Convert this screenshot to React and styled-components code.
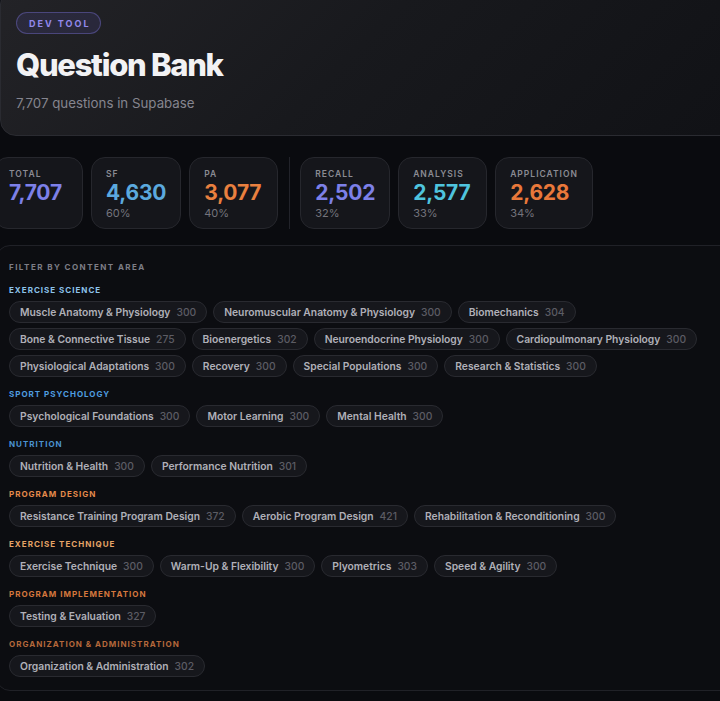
import React from 'react';
import styled, { createGlobalStyle } from 'styled-components';

const GlobalStyle = createGlobalStyle`
  html, body {
    margin: 0;
    padding: 0;
    background: #0a0b0f;
    overflow: hidden;
  }
  body {
    font-family: Inter, "Noto Sans", "Liberation Sans", sans-serif;
    -webkit-font-smoothing: antialiased;
  }
`;

const Page = styled.div`
  width: 780px;
  display: flex;
  flex-direction: column;
`;

const HeaderCard = styled.header`
  margin-top: -12px;
  padding: 23px 15px 22px;
  border: 1px solid #2a2b31;
  border-radius: 16px;
  background: linear-gradient(135deg, #232327 0%, #18191d 45%, #101115 100%);
  display: flex;
  flex-direction: column;
  align-items: flex-start;
`;

const Badge = styled.span`
  height: 22px;
  box-sizing: border-box;
  display: inline-flex;
  align-items: center;
  padding: 0 9px 0 12px;
  border-radius: 11px;
  border: 1px solid rgba(128, 118, 230, 0.38);
  background: rgba(110, 100, 220, 0.13);
  color: #9288ec;
  font-size: 9px;
  font-weight: 700;
  letter-spacing: 2px;
`;

const Title = styled.h1`
  margin: 12px 0 0;
  font-size: 31px;
  line-height: 37px;
  font-weight: 800;
  letter-spacing: -1.3px;
  color: #f2f2f4;
`;

const Subtitle = styled.p`
  margin: 10px 0 0;
  font-size: 13.3px;
  line-height: 20px;
  color: #85858f;
`;

const StatsRow = styled.div`
  display: flex;
  align-items: stretch;
  gap: 8px;
  margin: 21px 0 0 -6px;
`;

const StatCard = styled.div`
  box-sizing: border-box;
  min-width: 89px;
  padding: 11px 14px 8px;
  border: 1px solid #26272d;
  border-radius: 14px;
  background: #15161b;
  display: flex;
  flex-direction: column;
`;

const StatLabel = styled.span`
  font-size: 8.5px;
  line-height: 11px;
  font-weight: 600;
  letter-spacing: 1px;
  color: #8b8b93;
`;

const StatValue = styled.span`
  font-size: 21px;
  line-height: 26px;
  font-weight: 700;
  letter-spacing: -0.2px;
  color: ${({ $color }) => $color};
`;

const StatPct = styled.span`
  font-size: 11px;
  line-height: 14px;
  color: #74747c;
`;

const Divider = styled.div`
  width: 1px;
  margin: 0 2px 0 3px;
  background: #22232a;
`;

const FilterCard = styled.section`
  margin: 16px 0 0 -4px;
  padding: 15px 12px 13px;
  border: 1px solid #202127;
  border-radius: 14px;
  background: #0c0d11;
  display: flex;
  flex-direction: column;
`;

const FilterLabel = styled.div`
  font-size: 8px;
  line-height: 12px;
  font-weight: 700;
  letter-spacing: 1.45px;
  color: #7d7d86;
  margin-bottom: 11px;
`;

const Group = styled.div`
  display: flex;
  flex-direction: column;
  & + & {
    margin-top: 11px;
  }
`;

const GroupTitle = styled.div`
  font-size: 8px;
  line-height: 12px;
  font-weight: 700;
  letter-spacing: 1px;
  color: ${({ $color }) => $color};
  margin-bottom: 5px;
`;

const ChipWrap = styled.div`
  display: flex;
  flex-wrap: wrap;
  gap: 5px 6px;
  max-width: 700px;
`;

const Chip = styled.button`
  height: 22px;
  box-sizing: border-box;
  display: inline-flex;
  align-items: center;
  gap: 6px;
  padding: 0 10px;
  border: 1px solid #292a30;
  border-radius: 11px;
  background: #16171c;
  font-family: inherit;
  font-size: 10.3px;
  font-weight: 600;
  color: #b0b0b8;
  cursor: pointer;
`;

const ChipCount = styled.span`
  font-weight: 500;
  color: #5c5c64;
`;

const stats = [
  { label: 'TOTAL', value: '7,707', color: '#7d80e8' },
  { label: 'SF', value: '4,630', pct: '60%', color: '#5ba9de' },
  { label: 'PA', value: '3,077', pct: '40%', color: '#e9803f' },
];

const levels = [
  { label: 'RECALL', value: '2,502', pct: '32%', color: '#7d80e8' },
  { label: 'ANALYSIS', value: '2,577', pct: '33%', color: '#4fc4de' },
  { label: 'APPLICATION', value: '2,628', pct: '34%', color: '#e9783a' },
];

const groups = [
  {
    title: 'EXERCISE SCIENCE',
    color: '#8dc2ea',
    items: [
      ['Muscle Anatomy & Physiology', 300],
      ['Neuromuscular Anatomy & Physiology', 300],
      ['Biomechanics', 304],
      ['Bone & Connective Tissue', 275],
      ['Bioenergetics', 302],
      ['Neuroendocrine Physiology', 300],
      ['Cardiopulmonary Physiology', 300],
      ['Physiological Adaptations', 300],
      ['Recovery', 300],
      ['Special Populations', 300],
      ['Research & Statistics', 300],
    ],
  },
  {
    title: 'SPORT PSYCHOLOGY',
    color: '#4f9de0',
    items: [
      ['Psychological Foundations', 300],
      ['Motor Learning', 300],
      ['Mental Health', 300],
    ],
  },
  {
    title: 'NUTRITION',
    color: '#4a92d0',
    items: [
      ['Nutrition & Health', 300],
      ['Performance Nutrition', 301],
    ],
  },
  {
    title: 'PROGRAM DESIGN',
    color: '#e58a4b',
    items: [
      ['Resistance Training Program Design', 372],
      ['Aerobic Program Design', 421],
      ['Rehabilitation & Reconditioning', 300],
    ],
  },
  {
    title: 'EXERCISE TECHNIQUE',
    color: '#e6a467',
    items: [
      ['Exercise Technique', 300],
      ['Warm-Up & Flexibility', 300],
      ['Plyometrics', 303],
      ['Speed & Agility', 300],
    ],
  },
  {
    title: 'PROGRAM IMPLEMENTATION',
    color: '#d5773d',
    items: [['Testing & Evaluation', 327]],
  },
  {
    title: 'ORGANIZATION & ADMINISTRATION',
    color: '#b5683b',
    items: [['Organization & Administration', 302]],
  },
];

const Stat = ({ label, value, pct, color }) => (
  <StatCard>
    <StatLabel>{label}</StatLabel>
    <StatValue $color={color}>{value}</StatValue>
    {pct && <StatPct>{pct}</StatPct>}
  </StatCard>
);

const App = () => (
  <Page>
    <GlobalStyle />
    <HeaderCard>
      <Badge>DEV TOOL</Badge>
      <Title>Question Bank</Title>
      <Subtitle>7,707 questions in Supabase</Subtitle>
    </HeaderCard>

    <StatsRow>
      {stats.map((s) => (
        <Stat key={s.label} {...s} />
      ))}
      <Divider />
      {levels.map((s) => (
        <Stat key={s.label} {...s} />
      ))}
    </StatsRow>

    <FilterCard>
      <FilterLabel>FILTER BY CONTENT AREA</FilterLabel>
      {groups.map((g) => (
        <Group key={g.title}>
          <GroupTitle $color={g.color}>{g.title}</GroupTitle>
          <ChipWrap>
            {g.items.map(([name, count]) => (
              <Chip key={name}>
                {name}
                <ChipCount>{count}</ChipCount>
              </Chip>
            ))}
          </ChipWrap>
        </Group>
      ))}
    </FilterCard>
  </Page>
);

export default App;
